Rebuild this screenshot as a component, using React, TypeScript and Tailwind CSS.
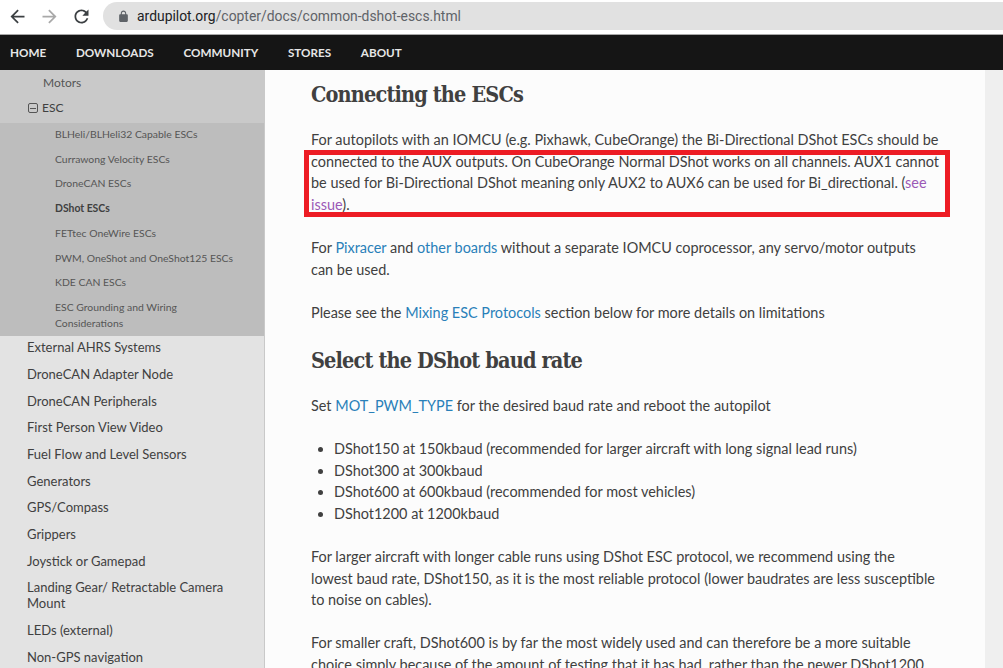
import React from "react";

const navItems = ["HOME", "DOWNLOADS", "COMMUNITY", "STORES", "ABOUT"];

const escItems = [
  "BLHeli/BLHeli32 Capable ESCs",
  "Currawong Velocity ESCs",
  "DroneCAN ESCs",
  "DShot ESCs",
  "FETtec OneWire ESCs",
  "PWM, OneShot and OneShot125 ESCs",
  "KDE CAN ESCs",
  "ESC Grounding and Wiring Considerations",
];

const topItems = [
  "External AHRS Systems",
  "DroneCAN Adapter Node",
  "DroneCAN Peripherals",
  "First Person View Video",
  "Fuel Flow and Level Sensors",
  "Generators",
  "GPS/Compass",
  "Grippers",
  "Joystick or Gamepad",
  "Landing Gear/ Retractable Camera Mount",
  "LEDs (external)",
  "Non-GPS navigation",
];

const Icon: React.FC<{ d: string; className: string }> = ({ d, className }) => (
  <svg viewBox="0 0 24 24" fill="currentColor" className={className}>
    <path d={d} />
  </svg>
);

const arrowLeft = "M20 11H7.83l5.59-5.59L12 4l-8 8 8 8 1.41-1.41L7.83 13H20v-2z";
const arrowRight = "M4 11h12.17l-5.59-5.59L12 4l8 8-8 8-1.41-1.41L16.17 13H4v-2z";
const reload =
  "M17.65 6.35C16.2 4.9 14.21 4 12 4c-4.42 0-7.99 3.58-7.99 8s3.57 8 7.99 8c3.73 0 6.84-2.55 7.73-6h-2.08c-.82 2.33-3.04 4-5.65 4-3.31 0-6-2.69-6-6s2.69-6 6-6c1.66 0 3.14.69 4.22 1.78L13 11h7V4l-2.35 2.35z";
const lock =
  "M18 8h-1V6c0-2.76-2.24-5-5-5S7 3.24 7 6v2H6c-1.1 0-2 .9-2 2v10c0 1.1.9 2 2 2h12c1.1 0 2-.9 2-2V10c0-1.1-.9-2-2-2zM9 6c0-1.66 1.34-3 3-3s3 1.34 3 3v2H9V6z";

const A: React.FC<{ children: React.ReactNode; visited?: boolean }> = ({ children, visited }) => (
  <a className={visited ? "text-[#9b59b6]" : "text-[#2980b9]"}>{children}</a>
);

const H2: React.FC<{ children: React.ReactNode }> = ({ children }) => (
  <h2 className="font-['DejaVu_Serif_Condensed','DejaVu_Serif',serif] text-[21.5px] tracking-[-0.85px] leading-[29px] font-bold text-[#404040] pt-[1px] mb-[20px]">
    {children}
  </h2>
);

export default function App() {
  return (
    <div className="w-[1003px] h-[668px] overflow-hidden bg-white flex flex-col font-['Lato',sans-serif]">
      {/* browser toolbar */}
      <div className="h-[35px] shrink-0 flex items-start pt-[2px] bg-white border-b border-[#a8a8a8]">
        <Icon d={arrowLeft} className="mt-[3.5px] ml-[7px] w-[21px] h-[21px] text-[#3c4043]" />
        <Icon d={arrowRight} className="mt-[3.5px] ml-[10.5px] w-[21px] h-[21px] text-[#a9a9a9]" />
        <Icon d={reload} className="mt-[3.5px] ml-[11px] w-[21px] h-[21px] text-[#3c4043]" />
        <div className="ml-[11.5px] flex-1 h-[28px] rounded-l-[14px] bg-[#e1e1e1] flex items-center font-['Roboto'] text-[13.9px]">
          <Icon d={lock} className="ml-[13.5px] w-[13px] h-[13px] text-[#5f6368]" />
          <span className="ml-[7.5px] text-[#202124]">ardupilot.org</span>
          <span className="text-[#5f6368]">/copter/docs/common-dshot-escs.html</span>
        </div>
      </div>

      {/* site nav */}
      <div className="h-[35px] shrink-0 bg-[#151515] flex items-center pl-[10px] gap-[29.7px] text-[11.7px] font-bold text-[#e6e6e6]">
        {navItems.map((item) => (
          <span key={item}>{item}</span>
        ))}
      </div>

      <div className="flex flex-1 min-h-0 bg-[#efefef]">
        {/* sidebar */}
        <div className="w-[265px] shrink-0 bg-[#e3e3e3] border-r border-[#c9c9c9] text-[#404040]">
          <div className="bg-[#c9c9c9]">
            <div className="h-[25px] pl-[43px] flex items-center text-[12px] text-[#555]">Motors</div>
            <div className="h-[28px] pb-[2px] pl-[28px] flex items-center text-[12px] text-[#404040]">
              <span className="w-[10px] h-[10px] mr-[4px] rounded-[2px] border border-[#555] flex items-center justify-center">
                <span className="w-[6px] h-px bg-[#555]" />
              </span>
              ESC
            </div>
          </div>
          <div className="bg-[#bdbdbd] text-[10.4px] text-[#555]">
            {escItems.map((item) => (
              <div
                key={item}
                className={`pl-[55px] pr-[25px] pb-[5px] pt-[4px] leading-[15.7px] ${item === "DShot ESCs" ? "font-bold text-[#404040]" : ""}`}
              >
                {item}
              </div>
            ))}
          </div>
          <div className="-mt-[2.5px] text-[13px] leading-[16px] text-[#404040]">
            {topItems.map((item) => (
              <div key={item} className="pl-[27px] pr-[30px] py-[5.35px]">
                {item}
              </div>
            ))}
          </div>
        </div>

        {/* article */}
        <div className="w-[720px] shrink-0 relative bg-[#fcfcfc] pl-[46px] pr-[45.5px] pt-[9px] text-[14.45px] leading-[21.6px] text-[#404040]">
          <H2>Connecting the ESCs</H2>
          <p className="mb-[21.6px]">
            For autopilots with an IOMCU (e.g. Pixhawk, CubeOrange) the Bi-Directional DShot ESCs should be connected
            to the AUX outputs. On CubeOrange Normal DShot works on all channels. AUX1 cannot be used for Bi-Directional
            DShot meaning only AUX2 to AUX6 can be used for Bi_directional. (<A visited>see issue</A>).
          </p>
          <p className="mb-[21.6px]">
            For <A>Pixracer</A> and <A>other boards</A> without a separate IOMCU coprocessor, any servo/motor outputs
            can be used.
          </p>
          <p className="mb-[21.6px]">
            Please see the <A>Mixing ESC Protocols</A> section below for more details on limitations
          </p>
          <H2>Select the DShot baud rate</H2>
          <p className="mb-[21.6px]">
            Set <A>MOT_PWM_TYPE</A> for the desired baud rate and reboot the autopilot
          </p>
          <ul className="list-disc pl-[23px] mb-[21.6px]">
            <li>DShot150 at 150kbaud (recommended for larger aircraft with long signal lead runs)</li>
            <li>DShot300 at 300kbaud</li>
            <li>DShot600 at 600kbaud (recommended for most vehicles)</li>
            <li>DShot1200 at 1200kbaud</li>
          </ul>
          <p className="mb-[21.6px]">
            For larger aircraft with longer cable runs using DShot ESC protocol, we recommend using the lowest baud
            rate, DShot150, as it is the most reliable protocol (lower baudrates are less susceptible to noise on
            cables).
          </p>
          <p className="mb-[21.6px]">
            For smaller craft, DShot600 is by far the most widely used and can therefore be a more suitable choice
            simply because of the amount of testing that it has had, rather than the newer DShot1200.
          </p>
          {/* red annotation box */}
          <div className="absolute left-[39px] top-[79.5px] w-[646px] h-[67.5px] border-[5px] border-[#ed1c24]" />
        </div>
      </div>
    </div>
  );
}
